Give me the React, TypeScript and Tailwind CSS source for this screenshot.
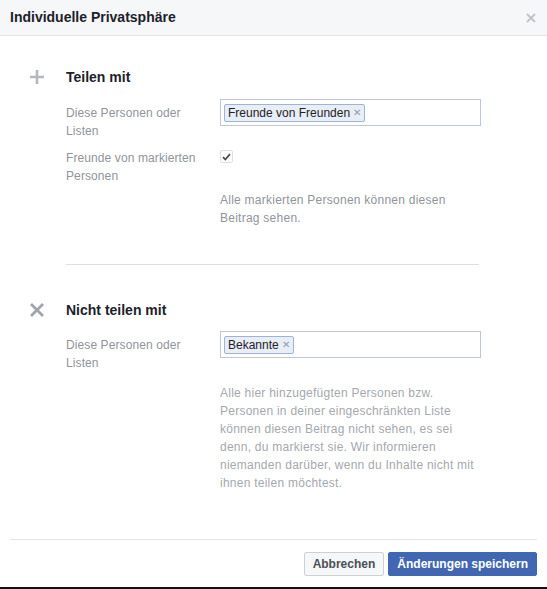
import React from 'react';

const font = { fontFamily: '"Liberation Sans", Arial, sans-serif' };

const Token = ({ label }: { label: string }) => (
  <span className="inline-flex items-center h-[18px] pl-[3px] pr-[3px] border border-[#9cb4d8] bg-[#e8edf6] rounded-[2px] text-[12px] text-[#1d2129] leading-none">
    {label}
    <span className="ml-[3px] text-[10px] text-[#8d9bb4]">✕</span>
  </span>
);

const TokenInput = ({ label }: { label: string }) => (
  <div className="w-[261px] h-[27px] border border-[#bdc7d8] bg-white flex items-center pl-[3px]">
    <Token label={label} />
  </div>
);

const PlusIcon = () => (
  <svg width="16" height="16" viewBox="0 0 16 16">
    <path d="M8 1v14M1 8h14" stroke="#b4b7bd" strokeWidth="2.6" />
  </svg>
);

const CrossIcon = () => (
  <svg width="16" height="16" viewBox="0 0 16 16">
    <path d="M2 2l12 12M14 2L2 14" stroke="#a0a4ab" strokeWidth="2.8" />
  </svg>
);

const Checkbox = () => (
  <div className="w-[13px] h-[13px] border border-[#dddfe2] rounded-[2px] bg-white flex items-center justify-center">
    <svg width="9" height="8" viewBox="0 0 9 8">
      <path d="M1 4.2l2.3 2.3L8 1.2" fill="none" stroke="#4b4f56" strokeWidth="1.8" />
    </svg>
  </div>
);

export default function App() {
  return (
    <div className="w-[547px] h-[589px] bg-white flex flex-col" style={font}>
      {/* Header */}
      <div className="h-[36px] shrink-0 bg-[#f6f7f9] border-b border-[#e5e5e5] flex items-center justify-between pl-[10px] pr-[11px]">
        <span className="text-[14px] font-bold text-[#1d2129]">Individuelle Privatsphäre</span>
        <svg width="10" height="10" viewBox="0 0 10 10">
          <path d="M1 1l8 8M9 1L1 9" stroke="#bec2c9" strokeWidth="1.8" />
        </svg>
      </div>

      {/* Body */}
      <div className="flex-1 pt-[32px]">
        {/* Teilen mit */}
        <div className="flex items-center h-[18px]">
          <div className="w-[66px] pl-[29px] flex items-center"><PlusIcon /></div>
          <span className="text-[14px] font-bold text-[#1d2129]">Teilen mit</span>
        </div>
        <div className="flex mt-[13px] pl-[66px]">
          <div className="w-[154px] pt-[5px] text-[12px] leading-[18px] text-[#90949c] tracking-[0.1px]">Diese Personen oder<br />Listen</div>
          <TokenInput label="Freunde von Freunden" />
        </div>
        <div className="flex mt-[9px] pl-[66px]">
          <div className="w-[154px] text-[12px] leading-[18px] text-[#90949c] tracking-[0.1px]">Freunde von markierten<br />Personen</div>
          <div className="pt-[1px]"><Checkbox /></div>
        </div>
        <p className="mt-[6px] ml-[220px] w-[270px] text-[12px] leading-[18px] text-[#90949c] tracking-[0.25px]">
          Alle markierten Personen können diesen<br />Beitrag sehen.
        </p>

        <div className="mt-[37px] ml-[66px] w-[413px] border-t border-[#dddfe2]" />

        {/* Nicht teilen mit */}
        <div className="flex items-center h-[18px] mt-[36px]">
          <div className="w-[66px] pl-[29px] flex items-center"><CrossIcon /></div>
          <span className="text-[14px] font-bold text-[#1d2129]">Nicht teilen mit</span>
        </div>
        <div className="flex mt-[12px] pl-[66px]">
          <div className="w-[154px] pt-[5px] text-[12px] leading-[18px] text-[#90949c] tracking-[0.1px]">Diese Personen oder<br />Listen</div>
          <TokenInput label="Bekannte" />
        </div>
        <p className="mt-[12px] ml-[220px] w-[280px] text-[12px] leading-[18px] text-[#a5a8ae] tracking-[0.25px]">
          Alle hier hinzugefügten Personen bzw.<br />
          Personen in deiner eingeschränkten Liste<br />
          können diesen Beitrag nicht sehen, es sei<br />
          denn, du markierst sie. Wir informieren<br />
          niemanden darüber, wenn du Inhalte nicht mit<br />
          ihnen teilen möchtest.
        </p>
      </div>

      {/* Footer */}
      <div className="shrink-0 mx-[10px] border-t border-[#e5e5e5] h-[48px] flex items-start justify-end pt-[12px] gap-[4px]">
        <button className="h-[24px] px-[8px] border border-[#ced0d4] bg-[#f6f7f9] rounded-[2px] text-[12px] font-bold text-[#4b4f56]">
          Abbrechen
        </button>
        <button className="h-[24px] px-[8px] border border-[#4267b2] bg-[#4267b2] rounded-[2px] text-[12px] font-bold text-white">
          Änderungen speichern
        </button>
      </div>
      <div className="h-[2px] shrink-0 bg-[#111111]" />
    </div>
  );
}
